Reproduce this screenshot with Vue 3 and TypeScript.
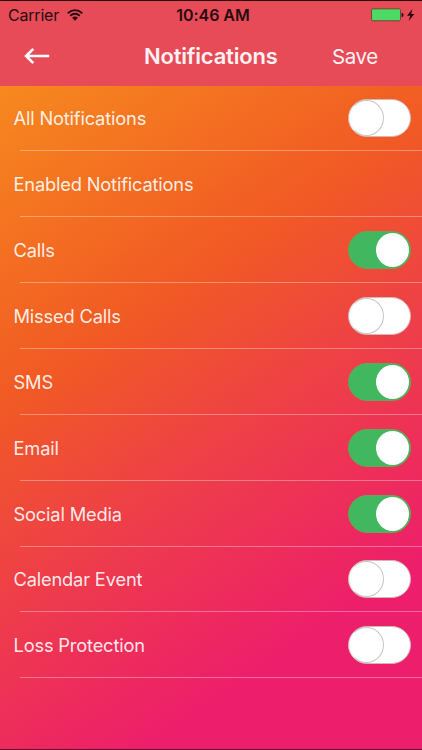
<script setup lang="ts">
import { ref } from 'vue'

interface Setting {
  label: string
  enabled?: boolean
}

const settings = ref<Setting[]>([
  { label: 'All Notifications', enabled: false },
  { label: 'Enabled Notifications' },
  { label: 'Calls', enabled: true },
  { label: 'Missed Calls', enabled: false },
  { label: 'SMS', enabled: true },
  { label: 'Email', enabled: true },
  { label: 'Social Media', enabled: true },
  { label: 'Calendar Event', enabled: false },
  { label: 'Loss Protection', enabled: false },
])

function toggle(item: Setting) {
  item.enabled = !item.enabled
}
</script>

<template>
  <main class="screen">
    <header class="header">
      <div class="status">
        <div class="carrier">
          <span>Carrier</span>
          <svg class="wifi" viewBox="0 0 16 12" width="16" height="12">
            <path d="M0.7 4.2Q8-2 15.3 4.2" />
            <path d="M3.2 6.8Q8 2.7 12.8 6.8" />
            <path class="solid" d="M5.1 8.8Q8 6.2 10.9 8.8L8 11.7Z" />
          </svg>
        </div>
        <span class="time">10:46 AM</span>
        <svg class="battery" viewBox="0 0 44 14" width="44" height="14">
          <rect class="cell" x="0.5" y="0.8" width="29" height="12" rx="1.4" />
          <path d="M30.6 4.8Q32.6 5 32.6 7T30.6 9.2Z" />
          <path d="M41.4 1L36 7.7H39.3L37.6 13L43.4 6H40.2Z" />
        </svg>
      </div>
      <nav class="nav">
        <button class="back" aria-label="Back">
          <svg viewBox="0 0 26 18" width="26" height="18">
            <path d="M25.2 9H2M9.3 1.8L2.1 9L9.3 16.2" />
          </svg>
        </button>
        <h1 class="title">Notifications</h1>
        <button class="save">Save</button>
      </nav>
    </header>
    <ul class="list">
      <li v-for="item in settings" :key="item.label" class="row">
        <span class="label">{{ item.label }}</span>
        <button
          v-if="item.enabled !== undefined"
          class="switch"
          :class="{ on: item.enabled }"
          role="switch"
          :aria-checked="item.enabled"
          :aria-label="item.label"
          @click="toggle(item)"
        >
          <span class="knob"></span>
        </button>
      </li>
    </ul>
  </main>
</template>

<style>
body {
  margin: 0;
}
</style>

<style scoped>
.screen {
  box-sizing: border-box;
  height: 750px;
  display: flex;
  flex-direction: column;
  border-top: 1px solid #250a0e;
  border-bottom: 1px solid #630c30;
  overflow: hidden;
  font-family: Inter, 'Liberation Sans', sans-serif;
  background: linear-gradient(146deg, #f78c1e 6%, #f15a24 39%, #ee3f48 58%, #ed1e6b 82%, #ed1e6b 100%);
}

button {
  border: 0;
  padding: 0;
  background: none;
  color: inherit;
  font: inherit;
}

.header {
  box-sizing: border-box;
  height: 84.5px;
  flex: none;
  background: #e64b57;
}

.status {
  height: 27px;
  display: grid;
  grid-template-columns: 1fr auto 1fr;
  align-items: center;
  padding: 0 7px 0 8px;
  color: #280b10;
  font-size: 16px;
}

.carrier {
  display: flex;
  align-items: center;
  gap: 7.5px;
  letter-spacing: -0.2px;
}

.wifi {
  fill: none;
  stroke: #280b10;
  stroke-width: 1.8;
}

.wifi .solid {
  fill: #280b10;
  stroke: none;
}

.time {
  margin-left: 3px;
  font-weight: 600;
  letter-spacing: -0.05px;
}

.battery {
  justify-self: end;
  fill: #280b10;
}

.battery .cell {
  fill: #4cd964;
  stroke: #6d4938;
}

.nav {
  height: 57px;
  display: grid;
  grid-template-columns: 144px 134px 1fr;
  align-items: center;
  color: #fff2f3;
}

.back {
  width: 26px;
  height: 18px;
  margin: -2px 0 0 24px;
}

.back svg {
  display: block;
  fill: none;
  stroke: #fff;
  stroke-width: 2.6;
}

.title {
  margin: -1px 0 0;
  font-size: 22px;
  font-weight: 600;
  letter-spacing: -0.2px;
  white-space: nowrap;
}

.save {
  justify-self: start;
  margin-left: 54px;
  font-size: 20.5px;
  letter-spacing: -0.4px;
}

.list {
  margin: 0;
  padding: 0;
  list-style: none;
}

.row {
  box-sizing: border-box;
  height: 65.87px;
  display: flex;
  align-items: center;
  justify-content: space-between;
  padding: 0 11.5px 0 13.5px;
  background: linear-gradient(rgba(255, 255, 255, 0.34), rgba(255, 255, 255, 0.34)) 20px 100% / 100% 1px no-repeat;
}

.label {
  color: rgba(255, 255, 255, 0.9);
  font-size: 18.3px;
  letter-spacing: -0.18px;
}

.switch {
  box-sizing: border-box;
  width: 63px;
  height: 38px;
  display: flex;
  align-items: center;
  border: 1px solid #d5b6b3;
  border-radius: 19px;
  background: #fff;
}

.knob {
  box-sizing: border-box;
  width: 35px;
  height: 36px;
  border: 1px solid #c9c4c4;
  border-left-color: #eee;
  border-radius: 50%;
  background: #fff;
}

.switch.on {
  justify-content: flex-end;
  padding-right: 1px;
  border-color: #6da356;
  background: #41b75f;
}

.switch.on .knob {
  width: 33px;
  height: 34px;
  border: 0;
}
</style>
